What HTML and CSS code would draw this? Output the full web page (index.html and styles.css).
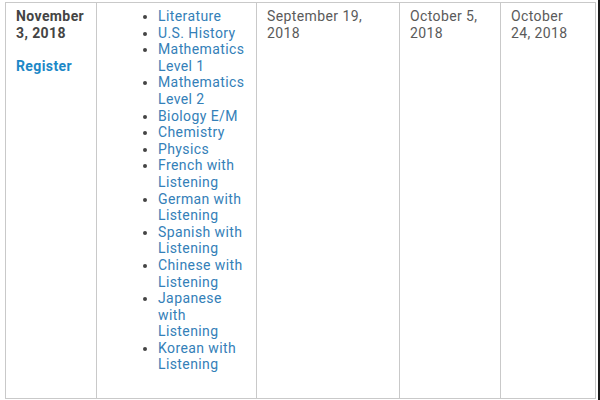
FILE: index.html
```html
<!DOCTYPE html>
<html>
<head>
<meta charset="utf-8">
<link rel="stylesheet" href="styles.css">
</head>
<body>
<div class="page">
  <table class="schedule">
    <colgroup>
      <col class="c1"><col class="c2"><col class="c3"><col class="c4"><col class="c5">
    </colgroup>
    <tr>
      <td class="date-cell">
        <p class="test-date">November 3, 2018</p>
        <p class="register"><a href="#">Register</a></p>
      </td>
      <td>
        <ul class="subjects">
          <li><a href="#">Literature</a></li>
          <li><a href="#">U.S. History</a></li>
          <li><a href="#">Mathematics Level 1</a></li>
          <li><a href="#">Mathematics Level 2</a></li>
          <li><a href="#">Biology E/M</a></li>
          <li><a href="#">Chemistry</a></li>
          <li><a href="#">Physics</a></li>
          <li><a href="#">French with Listening</a></li>
          <li><a href="#">German with Listening</a></li>
          <li><a href="#">Spanish with Listening</a></li>
          <li><a href="#">Chinese with Listening</a></li>
          <li><a href="#">Japanese with Listening</a></li>
          <li><a href="#">Korean with Listening</a></li>
        </ul>
      </td>
      <td>September 19, 2018</td>
      <td>October 5, 2018</td>
      <td>October 24, 2018</td>
    </tr>
  </table>
</div>
</body>
</html>
```
FILE: styles.css
```css
html, body {
  margin: 0;
  padding: 0;
  background: #ffffff;
}
.page {
  width: 600px;
  height: 400px;
  border-right: 2px solid #1a1a1a;
  padding: 2px 0 0 5px;
  box-sizing: border-box;
  overflow: hidden;
}
.schedule {
  border-collapse: collapse;
  width: 590px;
  height: 397px;
  table-layout: fixed;
  font-family: Roboto, "Liberation Sans", sans-serif;
  font-size: 14px;
  letter-spacing: 0.4px;
  line-height: 16.6px;
  color: #5a5a5a;
}
.c1 { width: 91px; }
.c2 { width: 160px; }
.c3 { width: 143px; }
.c4 { width: 101px; }
.c5 { width: 95px; }
.schedule td {
  border: 1px solid #c9c9c9;
  vertical-align: top;
  padding: 5px 10px 5px 10px;
}
.test-date {
  margin: 0 0 16.6px 0;
  font-weight: bold;
  color: #444444;
}
.register {
  margin: 0;
}
.register a {
  color: #1c88c7;
  font-weight: bold;
  text-decoration: none;
}
.subjects {
  margin: 0;
  padding: 0 0 0 51px;
  color: #444444;
}
.subjects a {
  color: #3480b8;
  text-decoration: none;
}
```
